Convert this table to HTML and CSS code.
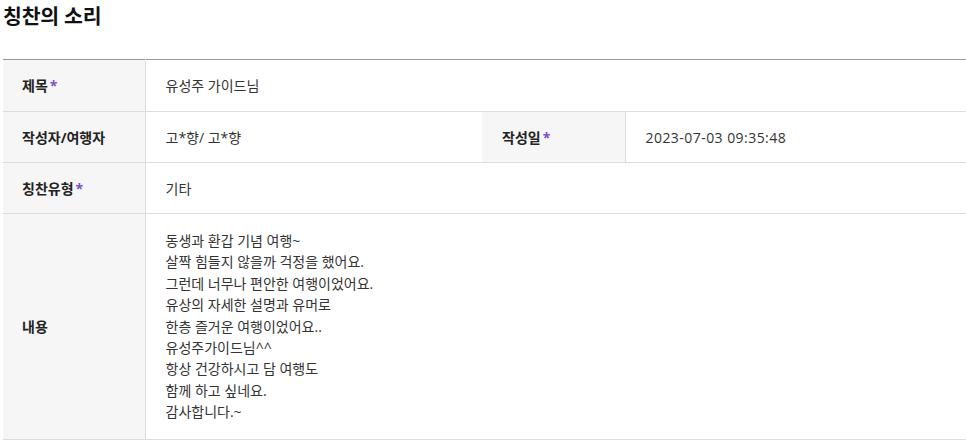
FILE: index.html
```html
<!DOCTYPE html>
<html lang="ko">
<head>
<meta charset="utf-8">
<link rel="stylesheet" href="styles.css">
</head>
<body>
<div class="page">
  <h2 class="title">칭찬의 소리</h2>
  <table class="view">
    <colgroup>
      <col class="c-label">
      <col class="c-value">
      <col class="c-label2">
      <col>
    </colgroup>
    <tbody>
      <tr class="first">
        <th>제목<span class="req">*</span></th>
        <td colspan="3">유성주 가이드님</td>
      </tr>
      <tr>
        <th>작성자/여행자</th>
        <td>고*향/ 고*향</td>
        <th>작성일<span class="req">*</span></th>
        <td class="date">2023-07-03 09:35:48</td>
      </tr>
      <tr>
        <th>칭찬유형<span class="req">*</span></th>
        <td colspan="3">기타</td>
      </tr>
      <tr>
        <th>내용</th>
        <td colspan="3" class="content">동생과 환갑 기념 여행~<br>살짝 힘들지 않을까 걱정을 했어요.<br>그런데 너무나 편안한 여행이었어요.<br>유상의 자세한 설명과 유머로<br>한층 즐거운 여행이었어요..<br>유성주가이드님^^<br>항상 건강하시고 담 여행도<br>함께 하고 싶네요.<br>감사합니다.~</td>
      </tr>
    </tbody>
  </table>
</div>
</body>
</html>
```
FILE: styles.css
```css
html, body {
  margin: 0;
  padding: 0;
  background: #fff;
}
body {
  font-family: "Open Sans", "Noto Sans CJK KR", sans-serif;
  color: #333;
}
.page {
  padding: 0 0 0 3px;
}
.title {
  margin: 0;
  padding-top: 2px;
  font-size: 20.5px;
  line-height: 28px;
  font-weight: 700;
  color: #111;
  letter-spacing: -0.2px;
}
.view {
  margin-top: 29px;
  width: 980px;
  border-collapse: collapse;
  table-layout: fixed;
  border-top: 1px solid #999;
  font-size: 14px;
}
.c-label { width: 142px; }
.c-value { width: 337px; }
.c-label2 { width: 143px; }
.view th,
.view td {
  height: 50px;
  padding: 0;
  border-bottom: 1px solid #ddd;
  vertical-align: middle;
  text-align: left;
  line-height: 21px;
}
.view .first th,
.view .first td {
  height: 51px;
}
.view th {
  background: #f6f6f6;
  font-weight: 700;
  color: #222;
  padding-left: 19px;
  border-right: 1px solid #ddd;
}
.view td {
  padding-left: 20px;
  color: #333;
}
.view th + td + th {
  padding-left: 20px;
}
.view td.date {
  letter-spacing: 0.45px;
}
.req {
  color: #7b4fc9;
  margin-left: 2px;
  font-weight: 700;
}
.view td.content {
  height: auto;
  padding-top: 16px;
  padding-bottom: 16px;
  line-height: 21.4px;
}
```
